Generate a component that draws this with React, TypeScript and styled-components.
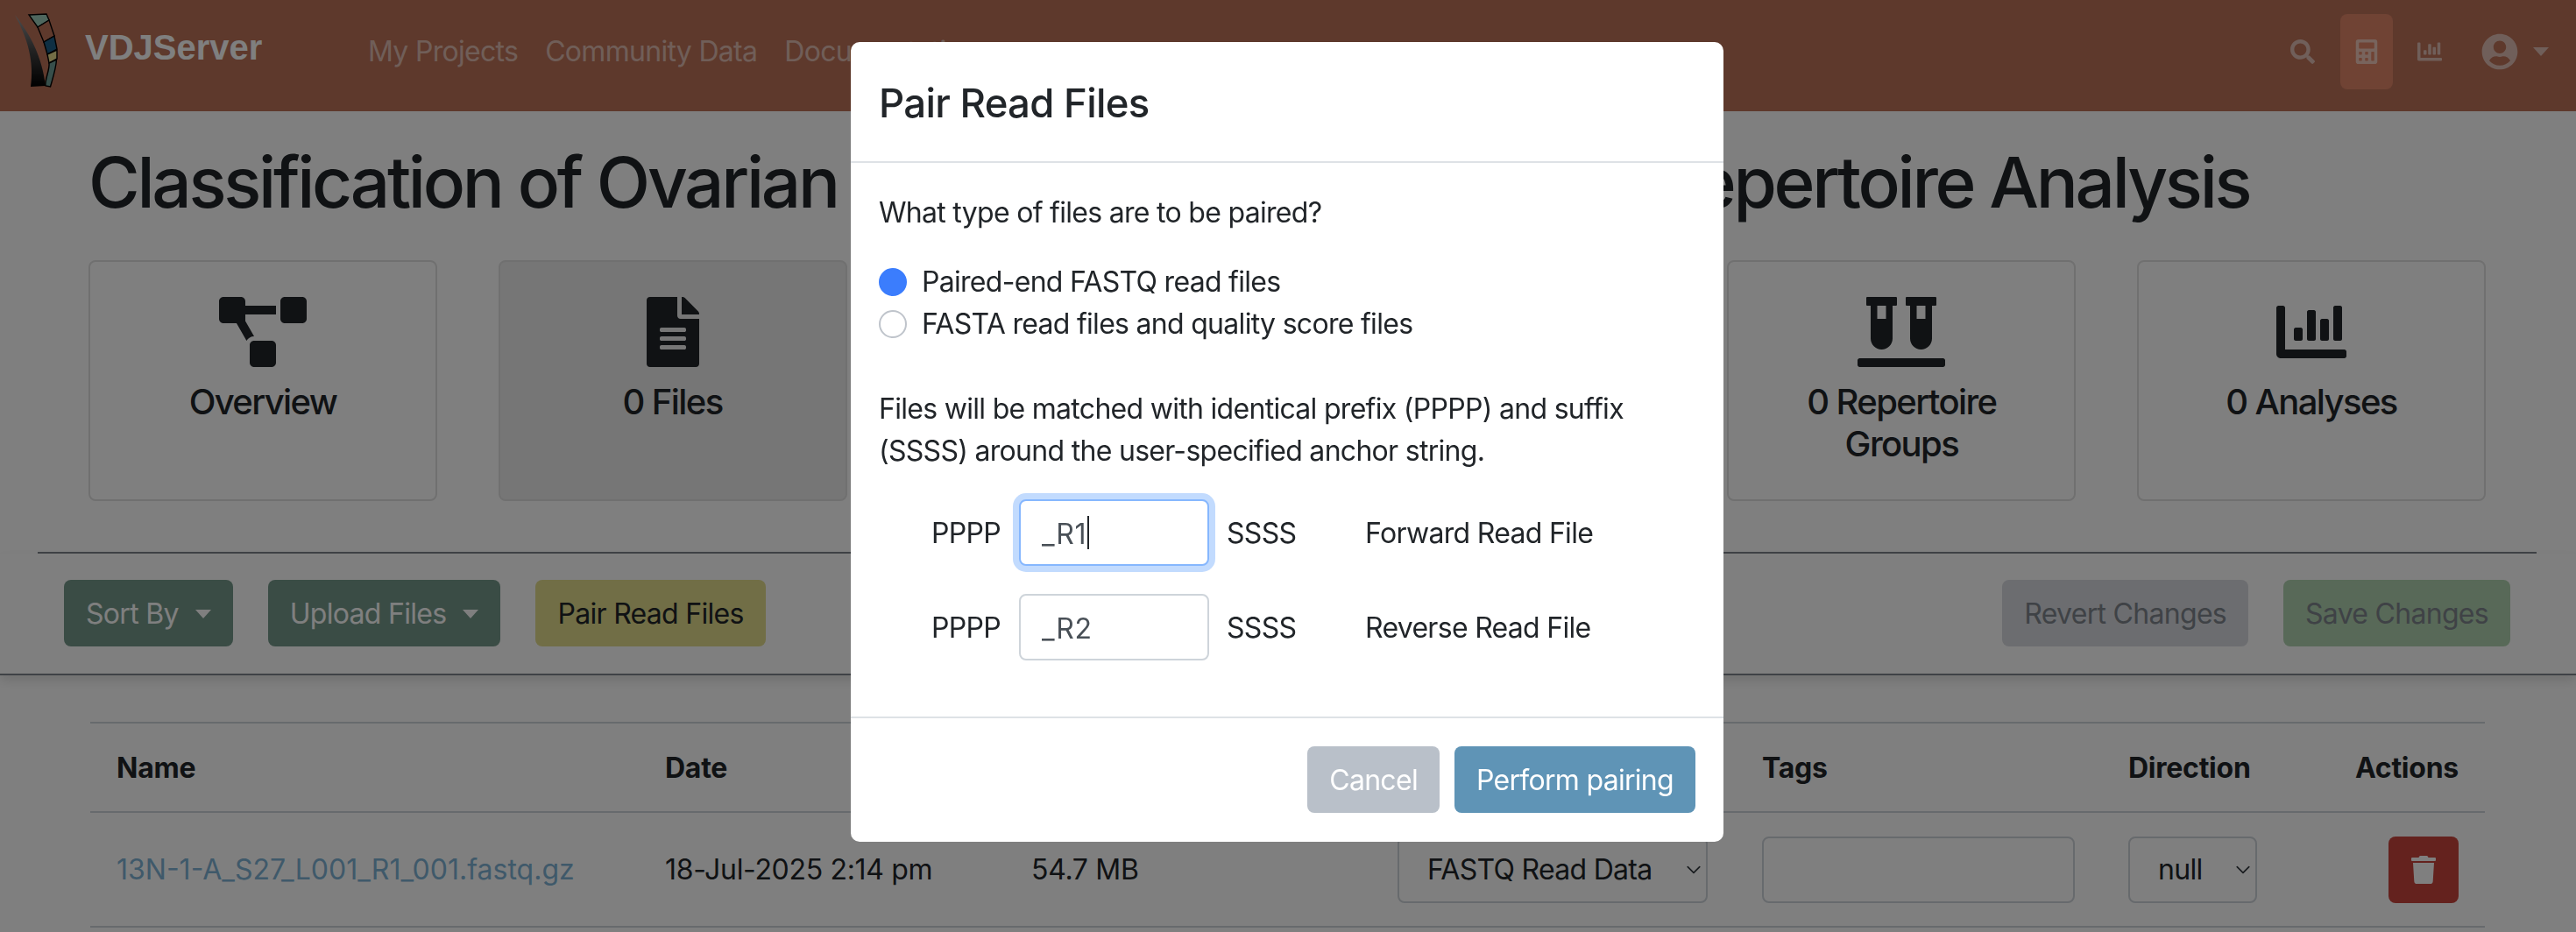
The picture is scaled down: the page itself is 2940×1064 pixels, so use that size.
import React from 'react'
import styled, { createGlobalStyle } from 'styled-components'
import { FaCalculator, FaChartBar, FaFileAlt, FaProjectDiagram, FaSearch, FaTrash, FaUserCircle, FaVials } from 'react-icons/fa'

const GlobalStyle = createGlobalStyle`
  html, body {
    margin: 0;
    height: 1064px;
    overflow: hidden;
    background: #fff;
    color: #212529;
    font-family: Inter, "Liberation Sans", sans-serif;
    font-size: 32px;
    line-height: 48px;
    letter-spacing: -0.022em;
  }
  * { box-sizing: border-box; }
`

const NavBar = styled.nav`
  height: 127px;
  display: flex;
  align-items: center;
  background: #bd7259;
  padding: 0 31px 0 16px;
`
const Brand = styled.div`
  display: flex;
  align-items: center;
  gap: 29px;
  width: 404px;
  font-family: "Liberation Sans", Arial, sans-serif;
  font-weight: 700;
  font-size: 40px;
  letter-spacing: 0;
  color: #fff;
  span { margin-top: -20px; }
  svg { margin-top: -11px; }
`
const NavLinks = styled.div`
  display: flex;
  gap: 31px;
  flex: 1;
  margin-top: -10px;
`
const NavLink = styled.a`
  color: rgba(255, 255, 255, 0.55);
`
const NavIcons = styled.div`
  display: flex;
  align-items: center;
  height: 86px;
  color: rgba(255, 255, 255, 0.55);
  margin-top: -9px;
`
const NavIcon = styled.div<{ $active?: boolean }>`
  width: ${(p) => (p.$active ? '60px' : '28px')};
  height: 86px;
  display: flex;
  align-items: center;
  justify-content: center;
  border-radius: 8px;
  background: ${(p) => (p.$active ? '#e08668' : 'transparent')};
  margin: 0 ${(p) => (p.$active ? '28px 0 29px' : '0')};
`
const UserMenu = styled.div`
  display: flex;
  align-items: center;
  gap: 17px;
  margin-left: 45px;
`
const Caret = styled.i`
  display: inline-block;
  border-top: 10px solid currentColor;
  border-left: 9px solid transparent;
  border-right: 9px solid transparent;
`
const Title = styled.h1`
  margin: 33px 0 41px 101px;
  font-size: 80px;
  line-height: 96px;
  font-weight: 500;
  white-space: nowrap;
  letter-spacing: -0.041em;
`
const TitleHidden = styled.span`
  word-spacing: -5.7px;
`
const Cards = styled.div`
  display: flex;
  gap: 69.6px;
  margin-left: 101px;
`
const Card = styled.div<{ $active?: boolean }>`
  width: 398px;
  height: 275px;
  padding: 40px 40px 0;
  border: 2px solid #e0e0e0;
  border-radius: 8px;
  background: ${(p) => (p.$active ? '#ececec' : '#fff')};
  text-align: center;
  color: #212529;
`
const CardIcon = styled.div<{ $width: number }>`
  height: 80px;
  svg {
    display: block;
    width: ${(p) => p.$width}px;
    height: 80px;
    margin: 0 auto;
  }
`
const CardLabel = styled.div`
  margin-top: 16px;
  font-size: 40px;
  line-height: 48px;
  font-weight: 500;
  letter-spacing: -0.04em;
`
const Rule = styled.hr`
  margin: 58px 45px 0 43px;
  border: 0;
  border-top: 2px solid #7e858c;
`
const Toolbar = styled.div`
  height: 139px;
  display: flex;
  align-items: flex-start;
  padding: 30px 75px 0 73px;
  border-bottom: 2px solid #7e858c;
  box-shadow: 0 6px 12px rgba(0, 0, 0, 0.12);
`
const ToolGroup = styled.div`
  display: flex;
  gap: 40px;
`
const Spacer = styled.div`
  flex: 1;
`
const Button = styled.button<{ $bg: string; $fg: string }>`
  height: 76px;
  padding: 2px 25px 0;
  display: inline-flex;
  align-items: center;
  gap: 19px;
  border: 0;
  border-radius: 8px;
  background: ${(p) => p.$bg};
  color: ${(p) => p.$fg};
  font: inherit;
  letter-spacing: inherit;
  white-space: nowrap;
`
const Table = styled.div`
  margin: 53px 104px 0 103px;
  border-top: 2px solid #cfd4da;
`
const Row = styled.div<{ $head?: boolean }>`
  display: grid;
  grid-template-columns: 626px 418px 418px 416px 418px 228px 1fr;
  align-items: center;
  height: ${(p) => (p.$head ? '102px' : '131px')};
  padding: ${(p) => (p.$head ? '2px' : '0')} 30px 0;
  border-bottom: 2px solid #cfd4da;
  font-weight: ${(p) => (p.$head ? 700 : 400)};
  letter-spacing: ${(p) => (p.$head ? '-0.008em' : '-0.01em')};
`
const RightCell = styled.div`
  display: flex;
  justify-content: flex-end;
  white-space: nowrap;
`
const FileLink = styled.a`
  color: #7fb3d5;
  letter-spacing: 0;
`
const chevron =
  "url(\"data:image/svg+xml,%3csvg xmlns='http://www.w3.org/2000/svg' viewBox='0 0 16 16'%3e%3cpath fill='none' stroke='%23343a40' stroke-linecap='round' stroke-linejoin='round' stroke-width='1.5' d='m2 5 6 6 6-6'/%3e%3c/svg%3e\")"
const Select = styled.select<{ $width: number }>`
  width: ${(p) => p.$width}px;
  height: 76px;
  padding: 0 0 0 32px;
  appearance: none;
  border: 2px solid #ced4da;
  border-radius: 8px;
  background: #fff ${chevron} no-repeat right 5px center / 18px 18px;
  color: #212529;
  font: inherit;
  letter-spacing: -0.022em;
`
const TagInput = styled.input`
  width: 357px;
  height: 76px;
  border: 2px solid #ced4da;
  border-radius: 8px;
  background: #fff;
`
const DeleteButton = styled.button`
  width: 80px;
  height: 76px;
  display: flex;
  align-items: center;
  justify-content: center;
  padding: 0;
  border: 0;
  border-radius: 8px;
  background: #c8443c;
  color: #fff;
`
const Backdrop = styled.div`
  position: fixed;
  inset: 0;
  background: rgba(0, 0, 0, 0.5);
`
const Modal = styled.div`
  position: absolute;
  top: 48px;
  left: 971px;
  width: 996px;
  height: 913px;
  background: #fff;
  border-radius: 10px;
  overflow: hidden;
`
const ModalHeader = styled.div`
  height: 138px;
  padding: 40px 32px 0;
  border-bottom: 2px solid #dee2e6;
  font-size: 45.5px;
  line-height: 60px;
  font-weight: 500;
`
const ModalBody = styled.div`
  height: 632px;
  padding: 33px 32px 0;
`
const Question = styled.div`
  margin-bottom: 31px;
`
const RadioLine = styled.label`
  display: flex;
  align-items: center;
  gap: 17px;
  height: 48px;
`
const Radio = styled.input`
  appearance: none;
  width: 32px;
  height: 32px;
  margin: 0;
  border-radius: 50%;
  border: 2px solid #bfc4cb;
  background: #fff;
  &:checked {
    border-color: #3b7dfd;
    background: #3b7dfd;
  }
`
const Note = styled.p`
  margin: 49px 0 31px;
  width: 930px;
`
const AnchorRow = styled.div`
  display: flex;
  align-items: center;
  height: 76px;
  margin: 0 0 32px 60px;
`
const AnchorLabel = styled.span`
  width: 100px;
  padding-top: 2px;
`
const AnchorField = styled.div`
  position: relative;
  display: flex;
`
const AnchorInput = styled.input<{ $focus?: boolean }>`
  width: 217px;
  height: 76px;
  padding: 2px 24px 0;
  border-radius: 8px;
  border: 2px solid ${(p) => (p.$focus ? '#86b7fe' : '#ced4da')};
  box-shadow: ${(p) => (p.$focus ? '0 0 0 7px rgba(13, 110, 253, 0.25)' : 'none')};
  outline: 0;
  color: #495057;
  font: inherit;
  letter-spacing: 0.02em;
`
const TextCaret = styled.i`
  position: absolute;
  left: 78px;
  top: 19px;
  width: 2px;
  height: 38px;
  background: #212529;
`
const SuffixLabel = styled.span`
  width: 158px;
  margin-left: 20px;
  padding-top: 2px;
`
const FileKind = styled.span`
  padding-top: 2px;
`
const ModalFooter = styled.div`
  height: 143px;
  display: flex;
  justify-content: flex-end;
  align-items: flex-start;
  gap: 17px;
  padding: 32px 32px 0;
  border-top: 2px solid #dee2e6;
`

const cards = [
  { icon: <FaProjectDiagram />, width: 100, label: 'Overview' },
  { icon: <FaFileAlt />, width: 60, label: '0 Files', active: true },
  { icon: <FaProjectDiagram />, width: 100, label: '0 Subjects' },
  { icon: <FaProjectDiagram />, width: 100, label: '0 Samples' },
  { icon: <FaVials />, width: 100, label: '0 Repertoire Groups' },
  { icon: <FaChartBar />, width: 80, label: '0 Analyses' },
]

const Logo = () => (
  <svg width="52" height="88" viewBox="16 14 52 88">
    <defs>
      <linearGradient id="blade" x1="0" y1="0" x2="0" y2="1">
        <stop offset="0" stopColor="#9a9a9a" />
        <stop offset="0.5" stopColor="#444" />
        <stop offset="1" stopColor="#000" />
      </linearGradient>
    </defs>
    <path d="M17 17C35 40 48 65 52 98L35 99C39 70 32 45 17 17Z" fill="url(#blade)" />
    <g stroke="#000" strokeWidth="1.4">
      <path d="M33 17L53 16L56 23L43 31Z" fill="#9fcfbc" />
      <path d="M43 31L56 23L62 41L50 48Z" fill="#bd7259" />
      <path d="M50 48L62 41L65 56L54 62Z" fill="#1f5f86" />
      <path d="M54 62L65 57L65 67L56 72Z" fill="#e6dc8c" />
      <path d="M56 72L64.5 68C64 78 60 90 57.5 99L52 98C51 90 57 80 56 72Z" fill="#6f9f96" />
    </g>
  </svg>
)

export default function App() {
  return (
    <>
      <GlobalStyle />
      <NavBar>
        <Brand>
          <Logo />
          <span>VDJServer</span>
        </Brand>
        <NavLinks>
          <NavLink>My Projects</NavLink>
          <NavLink>Community Data</NavLink>
          <NavLink>Documentation</NavLink>
        </NavLinks>
        <NavIcons>
          <NavIcon>
            <FaSearch size={28} />
          </NavIcon>
          <NavIcon $active>
            <FaCalculator size={28} />
          </NavIcon>
          <NavIcon>
            <FaChartBar size={28} />
          </NavIcon>
          <UserMenu>
            <FaUserCircle size={42} />
            <Caret />
          </UserMenu>
        </NavIcons>
      </NavBar>

      <Title>
        Classification of Ovarian <TitleHidden>Cancer by B Cell Receptor</TitleHidden> Repertoire Analysis
      </Title>

      <Cards>
        {cards.map((c) => (
          <Card key={c.label} $active={c.active}>
            <CardIcon $width={c.width}>{c.icon}</CardIcon>
            <CardLabel>{c.label}</CardLabel>
          </Card>
        ))}
      </Cards>

      <Rule />

      <Toolbar>
        <ToolGroup>
          <Button $bg="#74988a" $fg="#fff">
            Sort By <Caret />
          </Button>
          <Button $bg="#74988a" $fg="#fff">
            Upload Files <Caret />
          </Button>
          <Button $bg="#e2dc8c" $fg="#212529">
            Pair Read Files
          </Button>
        </ToolGroup>
        <Spacer />
        <ToolGroup>
          <Button $bg="#d8dbe0" $fg="#7e858c">
            Revert Changes
          </Button>
          <Button $bg="#b0d2b0" $fg="#7e858c">
            Save Changes
          </Button>
        </ToolGroup>
      </Toolbar>

      <Table>
        <Row $head>
          <div>Name</div>
          <div>Date</div>
          <div>Size</div>
          <div>Type</div>
          <div>Tags</div>
          <div>Direction</div>
          <RightCell>Actions</RightCell>
        </Row>
        <Row>
          <FileLink>13N-1-A_S27_L001_R1_001.fastq.gz</FileLink>
          <div>18-Jul-2025 2:14 pm</div>
          <div>54.7 MB</div>
          <div>
            <Select $width={354} defaultValue="fastq">
              <option value="fastq">FASTQ Read Data</option>
            </Select>
          </div>
          <div>
            <TagInput />
          </div>
          <div>
            <Select $width={147} defaultValue="null">
              <option value="null">null</option>
            </Select>
          </div>
          <RightCell>
            <DeleteButton>
              <FaTrash size={32} />
            </DeleteButton>
          </RightCell>
        </Row>
      </Table>

      <Backdrop>
        <Modal>
          <ModalHeader>Pair Read Files</ModalHeader>
          <ModalBody>
            <Question>What type of files are to be paired?</Question>
            <RadioLine>
              <Radio type="radio" name="kind" defaultChecked />
              Paired-end FASTQ read files
            </RadioLine>
            <RadioLine>
              <Radio type="radio" name="kind" />
              FASTA read files and quality score files
            </RadioLine>
            <Note>
              Files will be matched with identical prefix (PPPP) and suffix (SSSS) around the user-specified anchor
              string.
            </Note>
            <AnchorRow>
              <AnchorLabel>PPPP</AnchorLabel>
              <AnchorField>
                <AnchorInput $focus defaultValue="_R1" readOnly />
                <TextCaret />
              </AnchorField>
              <SuffixLabel>SSSS</SuffixLabel>
              <FileKind>Forward Read File</FileKind>
            </AnchorRow>
            <AnchorRow>
              <AnchorLabel>PPPP</AnchorLabel>
              <AnchorField>
                <AnchorInput defaultValue="_R2" readOnly />
              </AnchorField>
              <SuffixLabel>SSSS</SuffixLabel>
              <FileKind>Reverse Read File</FileKind>
            </AnchorRow>
          </ModalBody>
          <ModalFooter>
            <Button $bg="#b9c0c9" $fg="#fff">
              Cancel
            </Button>
            <Button $bg="#5f94b6" $fg="#fff">
              Perform pairing
            </Button>
          </ModalFooter>
        </Modal>
      </Backdrop>
    </>
  )
}
